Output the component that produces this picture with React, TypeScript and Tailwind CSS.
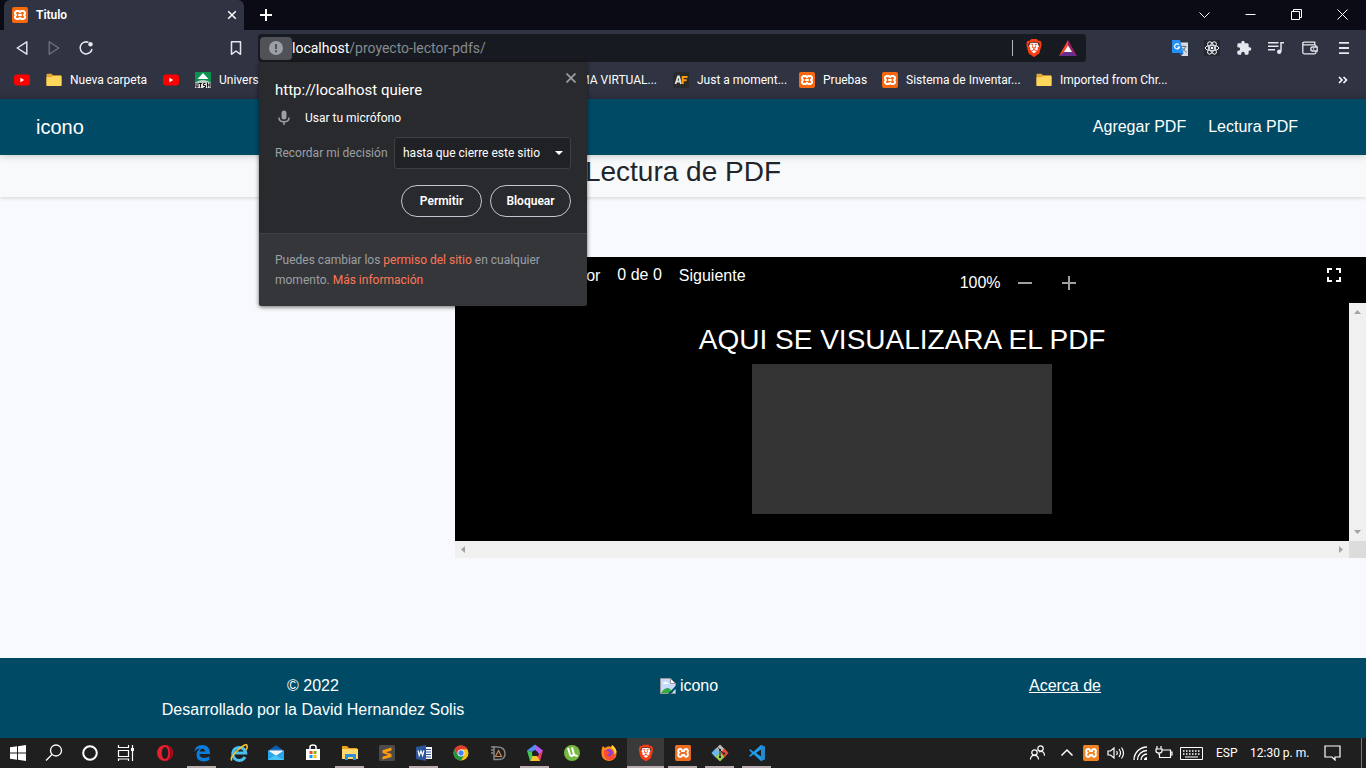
import React from 'react';
import { SiBrave, SiXampp } from 'react-icons/si';

type IconProps = { className?: string };

const Xampp = ({ className = 'size-4' }: IconProps) => (
  <span className={`${className} grid shrink-0 place-items-center rounded-[2px] bg-[#f8680f]`}>
    <svg viewBox="0 0 16 16" className="size-full" fill="none" stroke="#fff" strokeWidth="2" strokeLinejoin="round">
      <path d="M4.500 4h2.200L8 5.200 9.300 4h2.200l1.500 1.300v1.500L12 8l1 1.200v1.500L11.500 12H9.300L8 10.800 6.700 12H4.500L3 10.700V9.200L4 8 3 6.800V5.300z" />
      <path d="M6.200 8h3.600" />
    </svg>
  </span>
);

const BraveArt = () => (
  <g>
    <path d="M7 5h10l2 6-3 7-4 3-4-3-3-7z" fill="#fff" />
    <SiBrave size={24} color="#fb3d12" />
  </g>
);

const YouTube = () => (
  <svg viewBox="0 0 16 16" className="size-4 shrink-0">
    <rect y="2.500" width="16" height="11" rx="3" fill="#f00" />
    <path d="M6.400 5.800v4.400L10.200 8z" fill="#fff" />
  </svg>
);

const Folder = () => (
  <svg viewBox="0 0 16 16" className="size-4 shrink-0">
    <path d="M.5 2.500q0-.8.800-.8h4.200l1.400 1.500h7.800q.8 0 .8.800v9.300q0 .7-.8.7H1.300q-.8 0-.8-.7z" fill="#e5a832" />
    <path d="M.5 5.300h4.800L7 4h7.700q.8 0 .8.700v8.600q0 .7-.8.700H1.300q-.8 0-.8-.7z" fill="#ffd65c" />
  </svg>
);

const School = () => (
  <svg viewBox="0 0 16 16" className="size-4 shrink-0">
    <path d="M0 0h16v11H0z" fill="#0b9150" />
    <path d="M8 1l5.500 6h-11z" fill="#fff" />
    <path d="M0 10.500q8-5 16 0z" fill="#c9cbc9" />
    <path d="M0 10.500h16V16H0z" fill="#e4e4e4" />
    <path d="M1 11v4h2v-4M4 11.500h3M5.500 11v4.500M10.500 11.500h-2v2h2v2h-2M12.500 10.500v5M15 10.500v5M12.500 13H15" stroke="#111" fill="none" />
  </svg>
);

function Bookmark({ icon, label, width }: { icon: React.ReactNode; label?: string; width: string }) {
  return (
    <a href="#" aria-label={label ?? 'YouTube'} className={`flex shrink-0 items-center gap-2 whitespace-nowrap ${width}`}>
      {icon}
      {label}
    </a>
  );
}

function TabStrip() {
  return (
    <div className="flex h-[30px] bg-[#0a0b14] text-white">
      <div className="ml-1 flex w-60 items-center rounded-t-md bg-[#2f3342] pl-2 pr-[7px]">
        <Xampp />
        <span className="ml-2 flex-1 font-semibold">Titulo</span>
        <button aria-label="Cerrar pestaña" className="size-[10px]">
          <svg viewBox="0 0 10 10" stroke="#fff" strokeWidth="1.500"><path d="M1.200 1.200l7.600 7.600M8.800 1.200L1.200 8.800" /></svg>
        </button>
      </div>
      <button aria-label="Pestaña nueva" className="ml-4 w-3">
        <svg viewBox="0 0 12 12" stroke="#fff" strokeWidth="2"><path d="M6 0v12M0 6h12" /></svg>
      </button>
      <div className="ml-auto flex text-white">
        {[
          ['Buscar pestañas', 'M.5 3.500L5.500 8.500l5-5'],
          ['Minimizar', 'M.5 5.500h10'],
          ['Restaurar', 'M.5 2.500h8v8h-8zM2.500 2.500v-2h8v8h-2'],
          ['Cerrar', 'M.5.5l10 10M10.500.5l-10 10'],
        ].map(([name, d]) => (
          <button key={name} aria-label={name} className="flex w-[46px] items-center justify-center pb-[2px] pr-px">
            <svg viewBox="0 0 11 11" className="size-[11px]" fill="none" stroke="currentColor"><path d={d} /></svg>
          </button>
        ))}
      </div>
    </div>
  );
}

function AddressBar() {
  return (
    <div className="flex h-9 items-center text-[#e6e8ed]">
      <div className="flex w-[258px] shrink-0 items-center gap-4 pl-[14px] pr-[14px]">
        <button aria-label="Atrás"><svg viewBox="0 0 16 16" className="size-4" fill="none" stroke="currentColor" strokeWidth="1.400" strokeLinejoin="round"><path d="M12.800 1.800v12.400L3.200 8z" /></svg></button>
        <button aria-label="Adelante" className="text-[#70737f]"><svg viewBox="0 0 16 16" className="size-4" fill="none" stroke="currentColor" strokeWidth="1.300" strokeLinejoin="round"><path d="M3.200 1.800v12.400L12.800 8z" /></svg></button>
        <button aria-label="Recargar"><svg viewBox="0 0 16 16" className="size-4" fill="none" stroke="currentColor" strokeWidth="1.500"><path d="M10.500 2.400A6 6 0 1 0 14 9" /><circle cx="12.500" cy="4.300" r="2.200" fill="currentColor" stroke="none" /></svg></button>
        <button aria-label="Marcador" className="ml-auto"><svg viewBox="0 0 16 16" className="size-4" fill="none" stroke="currentColor" strokeWidth="1.500" strokeLinejoin="round"><path d="M3.500 1.700h9v12.600L8 11l-4.500 3.300z" /></svg></button>
      </div>
      <div className="flex h-7 flex-1 items-center rounded bg-[#181a21] px-[2px]">
        <button aria-label="Información del sitio" className="grid h-[23px] w-8 place-items-center rounded bg-[#505257]">
          <svg viewBox="0 0 14 14" className="size-[14px]"><circle cx="7" cy="7" r="7" fill="#9aa0a6" /><path d="M6 3h2v5H6zM6 9.200h2v2H6z" fill="#505257" /></svg>
        </button>
        <span className="text-sm leading-none text-[#858a90]"><span className="text-white">localhost</span>/proyecto-lector-pdfs/</span>
        <div className="ml-auto flex items-center gap-4 pr-[7px]">
          <span className="-mr-1 h-4 w-px bg-[#b6b7ba]" />
          <svg viewBox="0 0 24 24" className="size-[18px]"><BraveArt /></svg>
          <svg viewBox="0 0 18 16" className="h-4 w-[18px]">
            <path d="M9 0L0 16l9-5z" fill="#ff4724" /><path d="M9 0l9 16-9-5z" fill="#9e1f63" /><path d="M0 16h18l-5-4H5z" fill="#662d91" /><path d="M9 5.500l4 6.500H5z" fill="#fff" />
          </svg>
        </div>
      </div>
      <div className="flex w-[280px] shrink-0 items-center justify-end gap-4 pr-[14px]">
        <button aria-label="Traductor"><svg viewBox="0 0 16 16" className="size-4"><path d="M7 2.500h9V16H9z" fill="#dadce0" /><path d="M9 6.500h5.500M11.800 5.500v1M10 12l3.500-5M10.500 8l4 4.500" stroke="#607d8b" /><path d="M0 0h8l3.500 13H0z" fill="#2490f5" /><path d="M8 13h3.500L9.500 16z" fill="#1565c0" /><path d="M7 4.700A2.500 2.500 0 1 0 7.500 7H5.300" fill="none" stroke="#fff" strokeWidth="1.200" /></svg></button>
        <button aria-label="React"><svg viewBox="0 0 16 16" className="size-4" fill="none" stroke="#e9eaec"><path d="M0 0h16v16H0z" fill="#23272f" stroke="none" /><ellipse cx="8" cy="8" rx="6.800" ry="2.700" /><ellipse cx="8" cy="8" rx="6.800" ry="2.700" transform="rotate(60 8 8)" /><ellipse cx="8" cy="8" rx="6.800" ry="2.700" transform="rotate(120 8 8)" /><circle cx="8" cy="8" r="1.300" fill="#fff" stroke="none" /></svg></button>
        <button aria-label="Extensiones"><svg viewBox="0 0 24 24" className="size-4" fill="currentColor"><path d="M20.500 11H19V7a2 2 0 0 0-2-2h-4V3.500a2.500 2.500 0 0 0-5 0V5H4a2 2 0 0 0-2 2v3.800h1.500a2.700 2.700 0 0 1 0 5.400H2V20a2 2 0 0 0 2 2h3.800v-1.500a2.700 2.700 0 0 1 5.400 0V22H17a2 2 0 0 0 2-2v-4h1.500a2.500 2.500 0 0 0 0-5z" /></svg></button>
        <button aria-label="Lista de reproducción"><svg viewBox="0 0 16 16" className="size-4" fill="none" stroke="currentColor" strokeWidth="1.500"><path d="M0 2.700h10.500M0 6.200h10.500M0 9.700h7M16 2.700h-3v8.500" /><circle cx="11.200" cy="11.700" r="2.200" fill="currentColor" stroke="none" /></svg></button>
        <button aria-label="Cartera" className="ml-[2px]"><svg viewBox="0 0 16 16" className="size-4" fill="none" stroke="currentColor" strokeWidth="1.300"><path d="M.8 3.500v8.800q0 1.500 1.500 1.500h10.200q1.500 0 1.500-1.500V6q0-1.200-1.500-1.200H2Q.8 4.800.8 3.500 .8 2.200 2 2.200h10.700v2.500" /><path d="M15.200 7h-4.400q-2 0-2 2t2 2h4.400z" fill="#2f3342" /><circle cx="11.500" cy="9" r=".8" fill="currentColor" stroke="none" /></svg></button>
        <button aria-label="Menú" className="ml-[2px]"><svg viewBox="0 0 16 16" className="size-4" stroke="currentColor" strokeWidth="1.800"><path d="M3 2.800h10M3 8h10M3 13.200h10" /></svg></button>
      </div>
    </div>
  );
}

function BookmarksBar() {
  return (
    <div className="flex h-[33px] items-center overflow-hidden pb-[5px] text-white">
      <div className="flex w-[657px] shrink-0 items-center pl-[14px]">
        <Bookmark icon={<YouTube />} width="w-8" />
        <Bookmark icon={<Folder />} label="Nueva carpeta" width="w-[117px]" />
        <Bookmark icon={<YouTube />} width="w-8" />
        <Bookmark icon={<School />} label="Univers" width="w-16" />
        <a href="#" className="ml-auto">MA VIRTUAL...</a>
      </div>
      <div className="flex shrink-0 pl-4">
        <Bookmark
          icon={
            <svg viewBox="0 0 16 16" className="size-4 shrink-0"><rect width="16" height="16" rx="3" fill="#292a2b" /><path d="M2.500 12L5 4.500h1L8 12M3.500 9.500H7" stroke="#ddd" strokeWidth="1.800" fill="none" /><path d="M9.700 12V4.900h4.800M9.700 8.300h4" stroke="#ff9d0a" strokeWidth="2" fill="none" /></svg>
          }
          label="Just a moment..."
          width="w-[126px]"
        />
        <Bookmark icon={<Xampp />} label="Pruebas" width="w-[83px]" />
        <Bookmark icon={<Xampp />} label="Sistema de Inventar..." width="w-[154px]" />
        <Bookmark icon={<Folder />} label="Imported from Chr..." width="w-[134px]" />
      </div>
      <button aria-label="Más marcadores" className="ml-auto mr-[18px]">
        <svg viewBox="0 0 10 8" className="h-2 w-[10px]" fill="none" stroke="#fff" strokeWidth="1.600"><path d="M1 1l3 3-3 3M5.500 1l3 3-3 3" /></svg>
      </button>
    </div>
  );
}

function PermissionPopup() {
  return (
    <div role="dialog" aria-label="Permisos" className="absolute left-[259px] top-[62px] w-[328px] rounded-[3px] bg-[#292a2d] text-white shadow-[0_1px_4px_rgba(0,0,0,0.6)]">
      <div className="relative h-[171px] px-4 pt-4">
        <button aria-label="Cerrar aviso" className="absolute right-[11px] top-[11px] size-[10px]">
          <svg viewBox="0 0 10 10" stroke="#9aa0a6" strokeWidth="1.700"><path d="M.5.5l9 9M9.500.5l-9 9" /></svg>
        </button>
        <h2 className="text-[15px] leading-6">http://localhost quiere</h2>
        <p className="mt-[6px] flex h-5 items-center gap-3">
          <svg viewBox="0 0 18 18" className="size-[18px]" fill="none" stroke="#9aa0a6" strokeWidth="1.500"><rect x="6.500" y="1.500" width="5" height="9" rx="2.500" fill="#9aa0a6" stroke="none" /><path d="M4 8.500q0 4.300 5 4.300t5-4.300M9 13v3" /></svg>
          Usar tu micrófono
        </p>
        <div className="mt-[9px] flex h-8 items-center justify-between text-[#9aa0a6]">
          <label htmlFor="remember" className="whitespace-nowrap">Recordar mi decisión</label>
          <span className="relative">
            <select id="remember" className="block h-8 w-[177px] appearance-none rounded-[3px] border border-[#3c4043] bg-[#202124] pl-2 text-white">
              <option>hasta que cierre este sitio</option>
            </select>
            <svg viewBox="0 0 8 4" className="pointer-events-none absolute right-2 top-[14px] h-1 w-2" fill="#fff"><path d="M0 0h8L4 4z" /></svg>
          </span>
        </div>
        <div className="mt-4 flex justify-end gap-2 font-semibold">
          <button className="h-8 w-[81px] rounded-full border border-[#c2c4cf]">Permitir</button>
          <button className="h-8 w-[81px] rounded-full border border-[#c2c4cf]">Bloquear</button>
        </div>
      </div>
      <p className="h-[73px] whitespace-nowrap rounded-b-[3px] border-t border-[#3f4245] bg-[#35363a] px-4 pt-4 leading-5 text-[#9aa0a6]">
        Puedes cambiar los <a href="#" className="text-[#ff7654]">permiso del sitio</a> en cualquier<br />
        momento. <a href="#" className="text-[#ff7654]">Más información</a>
      </p>
    </div>
  );
}

function Viewer() {
  return (
    <section className="col-span-2 col-start-2 bg-black text-white">
      <div className="flex h-[46px] items-start">
        <div className="flex w-1/2 gap-[17px] pl-[89px] pt-[6px]">
          <button className="h-6 pt-px">Anterior</button>
          <span className="h-6">0 de 0</span>
          <button className="h-6 pt-px">Siguiente</button>
        </div>
        <div className="flex items-center pl-[49px] pt-[14px] text-[#a0a0a0]">
          <span className="text-white">100%</span>
          <button aria-label="Alejar" className="ml-[17px]"><svg viewBox="0 0 14 14" className="size-[14px]" stroke="currentColor" strokeWidth="2"><path d="M0 7h14" /></svg></button>
          <button aria-label="Acercar" className="ml-[30px]"><svg viewBox="0 0 14 14" className="size-[14px]" stroke="currentColor" strokeWidth="2"><path d="M0 7h14M7 0v14" /></svg></button>
        </div>
        <button aria-label="Pantalla completa" className="ml-auto mr-[25px] mt-[11px]">
          <svg viewBox="0 0 14 14" className="size-[14px]" fill="none" stroke="#fff" strokeWidth="2"><path d="M1 5V1h4M9 1h4v4M13 9v4H9M5 13H1V9" /></svg>
        </button>
      </div>
      <div className="grid grid-cols-[1fr_17px] grid-rows-[238px_17px]">
        <div className="flex flex-col items-center pt-5">
          <h3 className="whitespace-nowrap text-[28px] leading-[33px]">AQUI SE VISUALIZARA EL PDF</h3>
          <div className="mt-2 h-[150px] w-[300px] bg-[#333]" />
        </div>
        <div className="flex flex-col items-center justify-between bg-[#f0f0f0] py-[7px]">
          <svg viewBox="0 0 7 4" className="h-1 w-[7px]" fill="#a3a3a3"><path d="M0 4h7L3.500 0z" /></svg>
          <svg viewBox="0 0 7 4" className="h-1 w-[7px]" fill="#a3a3a3"><path d="M0 0h7L3.500 4z" /></svg>
        </div>
        <div className="flex items-center justify-between bg-[#f0f0f0] px-[6px]">
          <svg viewBox="0 0 4 7" className="h-[7px] w-1" fill="#a3a3a3"><path d="M4 0v7L0 3.500z" /></svg>
          <svg viewBox="0 0 4 7" className="h-[7px] w-1" fill="#a3a3a3"><path d="M0 0v7l4-3.500z" /></svg>
        </div>
        <div className="bg-[#dcdcdc]" />
      </div>
    </section>
  );
}

const line = { fill: 'none', stroke: '#fff', strokeWidth: 1.5 };

const system = [
  { name: 'Inicio', art: <path d="M2 4.300L9 3.300v6.200H2zM10 3.200l8-1.200v7.500h-8zM2 10.500h7v6.200l-7-1zM10 10.500h8V18l-8-1.200z" fill="#fff" /> },
  { name: 'Buscar', art: <g {...line} strokeWidth="1.300"><circle cx="12" cy="7.500" r="5.500" /><path d="M8 11.500L2 17.500" /></g> },
  { name: 'Cortana', art: <circle cx="10" cy="10" r="6.800" fill="none" stroke="#fff" strokeWidth="2" /> },
  { name: 'Vista de tareas', art: <g {...line} strokeWidth="1.200"><path d="M2.500 2v2.500h10V2M2.500 7.500h10v6h-10zM2.500 18v-2h10v2M16.500 2v16" /><path d="M15 5h3v3h-3z" fill="#fff" stroke="none" /></g> },
];

type TaskbarApp = { name: string; open?: boolean; active?: boolean; art: React.ReactNode };

const apps: TaskbarApp[] = [
  { name: 'Opera', art: <><ellipse cx="10" cy="10" rx="8" ry="8" fill="#e81f2e" /><path d="M11 2.100A8 8 0 0 1 11 17.900q4-2 4-7.900T11 2.100z" fill="#a70014" /><ellipse cx="10" cy="10" rx="3.300" ry="6" fill="#1f1e1e" /></> },
  { name: 'Edge', open: true, art: <path d="M2 9.500Q3 2 10 2q8 0 8.200 9H7.500q.3 4 5 4 2.500 0 4.800-1.400v3.500Q15 18.500 12 18.500q-7.500 0-7.500-7 0-4 4-6-5.500.5-6.500 4zM7.600 8.500h5.500q-.2-2.800-2.700-2.800-2.500.1-2.800 2.800z" fill="#0a7cdc" /> },
  { name: 'Internet Explorer', art: <><path d="M16 14a6.500 6.500 0 1 1 .7-4H6" fill="none" stroke="#49bff2" strokeWidth="3" /><path d="M3 17.500Q0 15 9 7t9-4q.8 1-1 4" fill="none" stroke="#f8c52b" strokeWidth="1.500" /></> },
  { name: 'Correo', art: <><path d="M2 8l8-6 8 6v9H2z" fill="#0a5ba8" /><path d="M4 6h12v6H4z" fill="#1c6fc0" /><path d="M2 7.500h16L10 13z" fill="#f4f8fb" /><path d="M2 7.500l8 5.500 8-5.500V17H2z" fill="#2aa6ee" /><path d="M2 17l7-5 9 5z" fill="#46c5f5" /></> },
  { name: 'Microsoft Store', art: <><path d="M7 6V4q0-2 3-2t3 2v2" {...line} /><path d="M3 6h14v11H3z" fill="#fff" /><path d="M6.500 8h3v3h-3z" fill="#f25022" /><path d="M10.500 8h3v3h-3z" fill="#7fba00" /><path d="M6.500 12h3v3h-3z" fill="#00a4ef" /><path d="M10.500 12h3v3h-3z" fill="#ffb900" /></> },
  { name: 'Explorador', open: true, art: <><path d="M2 3h5l2 2h8v3H2z" fill="#e9a321" /><path d="M2 6h16v10H2z" fill="#ffd86c" /><path d="M5 17v-6h11v6h-3v-3H8v3z" fill="#2b8edf" /></> },
  { name: 'Sublime Text', art: <><rect x="2" y="2" width="16" height="16" rx="1.500" fill="#4b4b4b" /><path d="M14.500 4.500v3L9 9.300l5.500 1.800v3l-9 2.500v-2.800l5.800-1.900L5.500 10V7.300z" fill="#ff9b0d" /></> },
  { name: 'Word', open: true, art: <><path d="M10 4h8v12h-8z" fill="#fff" /><path d="M12 6.500h5M12 9h5M12 11.500h5M12 14h5" stroke="#2b579a" /><path d="M2 4l10-2v16L2 16z" fill="#2b579a" /><path d="M4 7.500l1.200 5L7 8l1.600 4.500 1.300-5" fill="none" stroke="#fff" strokeWidth="1.200" /></> },
  { name: 'Chrome', art: <><circle cx="10" cy="10" r="7.500" fill="#fbc116" /><path d="M3.500 6.200a7.500 7.500 0 0 1 13 0H10L6.700 12z" fill="#e33b2e" /><path d="M3.500 6.200a7.500 7.500 0 0 0 6.500 11.300l3.300-5.600H6.700z" fill="#229342" /><circle cx="10" cy="10" r="3.500" fill="#fff" /><circle cx="10" cy="10" r="2.700" fill="#4285f4" /></> },
  { name: 'Dia', art: <><path d="M3 4h6q8 0 8 6.500T10 16.500H6V3M3 7h3M3 10h3" fill="none" stroke="#868686" strokeWidth="1.500" /><path d="M10.500 7.500l3 6h-6z" fill="none" stroke="#c88750" strokeWidth="1.200" /></> },
  { name: 'Estudio', open: true, art: <><path d="M10 1.500L2 7.500l5 1.500L10 7z" fill="#4f8df5" /><path d="M10 1.500l8 6-3.500 4L10 7z" fill="#b65cf0" /><path d="M18 7.500L15 18l-5-1 3.500-5z" fill="#ed3d61" /><path d="M15 18H5l2-5h5z" fill="#f7c22c" /><path d="M5 18L2 7.500 7 9l.5 4.500z" fill="#43cb55" /><path d="M10 7l3 2.300-1.200 3.700H8.200L7 9.300z" fill="#242021" /></> },
  { name: 'uTorrent', art: <><circle cx="10" cy="10" r="8" fill="#76b83f" /><path d="M6 5l2 6.500q.8 2 2.500 1.200t1-3L10 4.500M12 10.500q1 3 3.500 2" fill="none" stroke="#fff" strokeWidth="2" /></> },
  { name: 'Firefox', art: <><path d="M3 5l1-2 2 2q3-3 6-1l1-2q4 3 4.500 7 .5 8-7 9-7.500-.5-8-7Q2.300 7.500 3 5z" fill="#ff8a16" /><circle cx="10" cy="10.500" r="4.500" fill="#8441d4" /><path d="M5 7l4 1 2 2-3 2q2 2 5 0 2-3-1-6 5 2 5 6-2 6-8 5-5-2-4-10z" fill="#ff4c36" /><path d="M13 2q4 3 4.500 7l-2 3q0-5-3-7z" fill="#ffd43c" /></> },
  { name: 'Brave', open: true, active: true, art: <g transform="translate(1.500 1.500) scale(0.7)"><BraveArt /></g> },
  { name: 'XAMPP', open: true, art: <g transform="translate(2 2)"><path d="M1 1h14v14H1z" fill="#fff" /><SiXampp size={16} color="#ee6d20" /></g> },
  { name: 'Git Bash', open: true, art: <><path d="M10 1.500L5.500 6 10 10.500 14.500 6z" fill="#bcbcbc" /><path d="M5.500 5.500L1.500 10l4 4.500L10 10z" fill="#6bb6ef" /><path d="M14.500 5.500l4 4.500-4 4.500L10 10z" fill="#e34e37" /><path d="M10 9.500L5.500 14l4.500 4.500 4.500-4.500z" fill="#9bce55" /><path d="M8 4.500l2 2.500v6.500M10 7l3.500 3.500" stroke="#222" fill="none" /><path d="M9 6h2v2H9zM13 9.500h2v2h-2zM9 13h2v2H9z" fill="#222" /></> },
  { name: 'VS Code', open: true, art: <><path d="M14 2l4 1.800v12.400L14 18 6.500 11.200 3.300 13.700 2 13l3-3-3-3 1.300-.7 3.200 2.500zM14 6.500L9 10l5 3.500z" fill="#1f9cf0" fillRule="evenodd" /><path d="M14 2l4 1.800v12.400L14 18z" fill="#2489ca" /></> },
];

const tray = [
  { name: 'Contactos', width: 'w-[38px]', art: <g {...line} strokeWidth="1.200"><circle cx="7.500" cy="9.500" r="2.700" /><circle cx="13.500" cy="5.500" r="2.700" /><path d="M3.500 16.500q0-4.200 4-4.200t4 4.200M12 8.800q5.500-1.500 5.500 4" /></g> },
  { name: 'Iconos ocultos', width: 'w-[22px]', art: <path d="M4.500 12.500L10 7l5.500 5.500" {...line} /> },
  { name: 'XAMPP', width: 'w-[26px]', art: <g transform="translate(2 2)"><path d="M1 1h14v14H1z" fill="#fff" /><SiXampp size={16} color="#f08322" /></g> },
  { name: 'Volumen', width: 'w-[23px]', art: <g {...line} strokeWidth="1.200"><path d="M2 8h2.500L8 5v10l-3.500-3H2zM10.500 8q1.500 2 0 4M13 6q3 4 0 8M15.500 4.500q4 5.500 0 11" /></g> },
  { name: 'Red', width: 'w-[27px]', art: <g {...line} strokeWidth="1.300"><path d="M3 17A13 13 0 0 1 16 4M6.500 17A9.500 9.500 0 0 1 16 7.500M10 17a6 6 0 0 1 6-6" /><path d="M13 17v-1q1-2 3-2v3z" fill="#fff" stroke="none" /></g> },
  { name: 'Batería', width: 'w-[20px]', art: <g {...line} strokeWidth="1.200"><path d="M8 7h8.500v7.500h-11V11M16.500 9h1.500v3h-1.500M3 3v3M7 3v3M2 6h6v2q0 2-3 2t-3-2zM5 10v2" /></g> },
];

function Taskbar() {
  return (
    <div className="flex h-[30px] items-stretch bg-[#201f1f] text-xs text-white">
      <div className="flex w-[146px] shrink-0">
        {system.map(({ name, art }) => (
          <button key={name} aria-label={name} className="grid w-9 place-items-center"><svg viewBox="0 0 20 20" className="size-5">{art}</svg></button>
        ))}
      </div>
      {apps.map(({ name, open, active, art }) => (
        <button key={name} aria-label={name} className={`relative grid w-[37px] shrink-0 place-items-center ${active ? 'bg-[#3b3a3a]' : ''}`}>
          <svg viewBox="0 0 20 20" className="size-5">{art}</svg>
          {open && <span className={`absolute bottom-0 h-[2px] bg-[#b8abad] ${active ? 'inset-x-0' : 'inset-x-1'}`} />}
        </button>
      ))}
      <div className="ml-auto flex items-center">
        {tray.map(({ name, width, art }) => (
          <button key={name} aria-label={name} className={`grid place-items-center ${width}`}><svg viewBox="0 0 20 20" className="size-5">{art}</svg></button>
        ))}
        <button aria-label="Teclado" className="ml-[6px]">
          <svg viewBox="0 0 23 13" className="h-[13px] w-[23px]" fill="none" stroke="#fff"><path d="M.5.5h22v12H.5zM5 10h13" /><path d="M3 4h17M3 7h17" strokeWidth="1.500" strokeDasharray="1.500 1.500" /></svg>
        </button>
        <span className="ml-[13px] w-[34px]">ESP</span>
        <span className="w-[74px] whitespace-nowrap">12:30 p. m.</span>
        <button aria-label="Notificaciones" className="mr-5"><svg viewBox="0 0 17 16" className="h-4 w-[17px]" {...line} strokeWidth="1.200"><path d="M1 1h15v11h-5v3l-3-3H1z" /></svg></button>
        <span className="mr-1 h-[30px] w-px bg-[#777]" />
      </div>
    </div>
  );
}

export default function App() {
  return (
    <div className="relative flex min-h-screen flex-col bg-[#f8f9fc] font-['Liberation_Sans',Arial,sans-serif] text-base leading-6 text-[#212529]">
      <header className="bg-[#2f3342] font-[Roboto,'Open_Sans',sans-serif] text-xs">
        <TabStrip />
        <AddressBar />
        <BookmarksBar />
      </header>
      <nav className="relative flex h-14 items-center bg-[#004a66] pl-9 pr-[68px] text-white shadow-[0_0_8px_rgba(0,0,0,0.25)]">
        <a href="#" className="text-xl">icono</a>
        <div className="ml-auto flex gap-[22px]">
          <a href="#">Agregar PDF</a>
          <a href="#">Lectura PDF</a>
        </div>
      </nav>
      <div className="bg-[#f8f9fa] pb-2 text-center shadow-[0_1px_4px_rgba(0,0,0,0.15)]">
        <h1 className="text-[28px] leading-[34px]">Lectura de PDF</h1>
      </div>
      <main className="grid flex-1 grid-cols-3 items-start pb-[100px] pt-[60px]">
        <Viewer />
      </main>
      <footer className="grid grid-cols-3 bg-[#004a66] py-4 pl-[125px] pr-[113px] text-center text-white">
        <p>© 2022<br />Desarrollado por la David Hernandez Solis</p>
        <p className="flex items-center justify-center gap-1 self-start">
          <svg viewBox="0 0 16 16" className="size-4"><path d="M.5.500h10l5 5v10H.5z" fill="#c7dafa" stroke="#999" /><path d="M10.500.500v5h5z" fill="#fff" stroke="#999" /><path d="M3 6q0-2 2-2 1.500-1 2.500 1 1.500 0 1.500 1z" fill="#fff" /><path d="M1 15q3-5 7-5 2 0 5 5z" fill="#35aa45" /><path d="M16 7.500v3L10.500 16H8z" fill="#004a66" /></svg>
          icono
        </p>
        <p><a href="#" className="underline">Acerca de</a></p>
      </footer>
      <div className="font-[Roboto,'Open_Sans',sans-serif]"><Taskbar /></div>
      <div className="font-[Roboto,'Open_Sans',sans-serif] text-xs"><PermissionPopup /></div>
    </div>
  );
}
